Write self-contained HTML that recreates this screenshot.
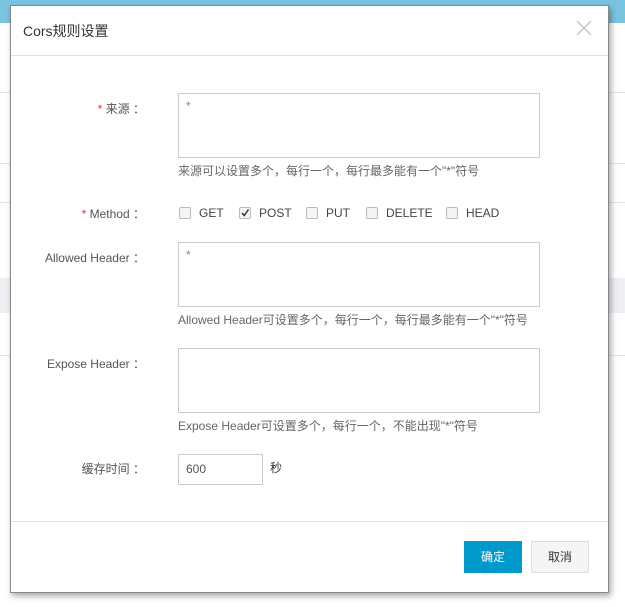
<!DOCTYPE html>
<html><head><meta charset="utf-8"><style>
*{box-sizing:border-box;margin:0;padding:0}
body{width:625px;height:607px;position:relative;overflow:hidden;background:#fff;font-family:"Liberation Sans","Noto Sans CJK SC",sans-serif;font-size:12px;color:#555}
.top{position:absolute;left:0;top:0;width:625px;height:23px;background:#79c5df}
.bl{position:absolute;left:0;width:625px;height:1px;background:#e4e4e4}
.modal{position:absolute;left:10px;top:5px;width:599px;height:588px;background:#fff;border:1px solid #888;box-shadow:2px 3px 6px rgba(0,0,0,.35)}
.hd{position:absolute;left:0;top:0;width:100%;height:50px;border-bottom:1px solid #e1e1e1}
.hd .t{position:absolute;left:12px;top:15px;font-size:14px;color:#333}
.x{position:absolute;right:16px;top:14px}
.lbl{position:absolute;right:463px;text-align:right;color:#555;white-space:nowrap}
.lbl i{font-style:normal;color:#e33}
.ta{position:absolute;left:167px;width:362px;height:65px;border:1px solid #ccc;padding:5px 7px;color:#888}
.hint{position:absolute;left:167px;color:#666;white-space:nowrap}
.cb{position:absolute;top:200px;display:flex;align-items:center;color:#444}
.cb span.b{width:12px;height:12px;border:1px solid #bbb;border-radius:2px;background:#f5f5f5;margin-right:8px;position:relative}
.inp{position:absolute;left:167px;top:448px;width:85px;height:31px;border:1px solid #ccc;padding:7px 7px;color:#555}
.ft{position:absolute;left:0;top:515px;width:100%;height:1px;background:#e1e1e1}
.btn{position:absolute;top:535px;width:58px;height:32px;text-align:center;line-height:32px;font-size:12px}
</style></head><body>
<div class="top"></div>
<div class="bl" style="top:92px"></div>
<div class="bl" style="top:163px"></div>
<div class="bl" style="top:202px"></div>
<div class="bl" style="top:278px;background:#eef0f4;height:35px"></div>
<div class="bl" style="top:355px"></div>
<div class="modal">
<div class="hd"><div class="t">Cors规则设置</div>
<svg class="x" width="16" height="16" viewBox="0 0 16 16"><path d="M1 1L15 15M15 1L1 15" stroke="#c4c4c4" stroke-width="1.4"/></svg></div>
<div class="lbl" style="top:94px"><i>*</i> 来源 ：</div>
<div class="ta" style="top:87px">*</div>
<div class="hint" style="top:156px">来源可以设置多个，每行一个，每行最多能有一个"*"符号</div>
<div class="lbl" style="top:199px"><i>*</i> Method ：</div>
<div class="cb" style="left:168px"><span class="b"></span>GET</div>
<div class="cb" style="left:228px"><span class="b"><svg width="10" height="10" viewBox="0 0 10 10" style="position:absolute;left:0;top:0"><path d="M2 5L4.2 7.5L8.5 1.5" stroke="#333" stroke-width="1.5" fill="none"/></svg></span>POST</div>
<div class="cb" style="left:295px"><span class="b"></span>PUT</div>
<div class="cb" style="left:355px"><span class="b"></span>DELETE</div>
<div class="cb" style="left:435px"><span class="b"></span>HEAD</div>
<div class="lbl" style="top:243px">Allowed Header ：</div>
<div class="ta" style="top:236px">*</div>
<div class="hint" style="top:305px">Allowed Header可设置多个，每行一个，每行最多能有一个"*"符号</div>
<div class="lbl" style="top:349px">Expose Header ：</div>
<div class="ta" style="top:342px"></div>
<div class="hint" style="top:411px">Expose Header可设置多个，每行一个，不能出现"*"符号</div>
<div class="lbl" style="top:454px">缓存时间 ：</div>
<div class="inp">600</div>
<div style="position:absolute;left:259px;top:453px;color:#333">秒</div>
<div class="ft"></div>
<div class="btn" style="left:453px;background:#0099cc;color:#fff">确定</div>
<div class="btn" style="left:520px;background:#f5f5f5;border:1px solid #ddd;color:#333;line-height:30px">取消</div>
</div>
</body></html>
